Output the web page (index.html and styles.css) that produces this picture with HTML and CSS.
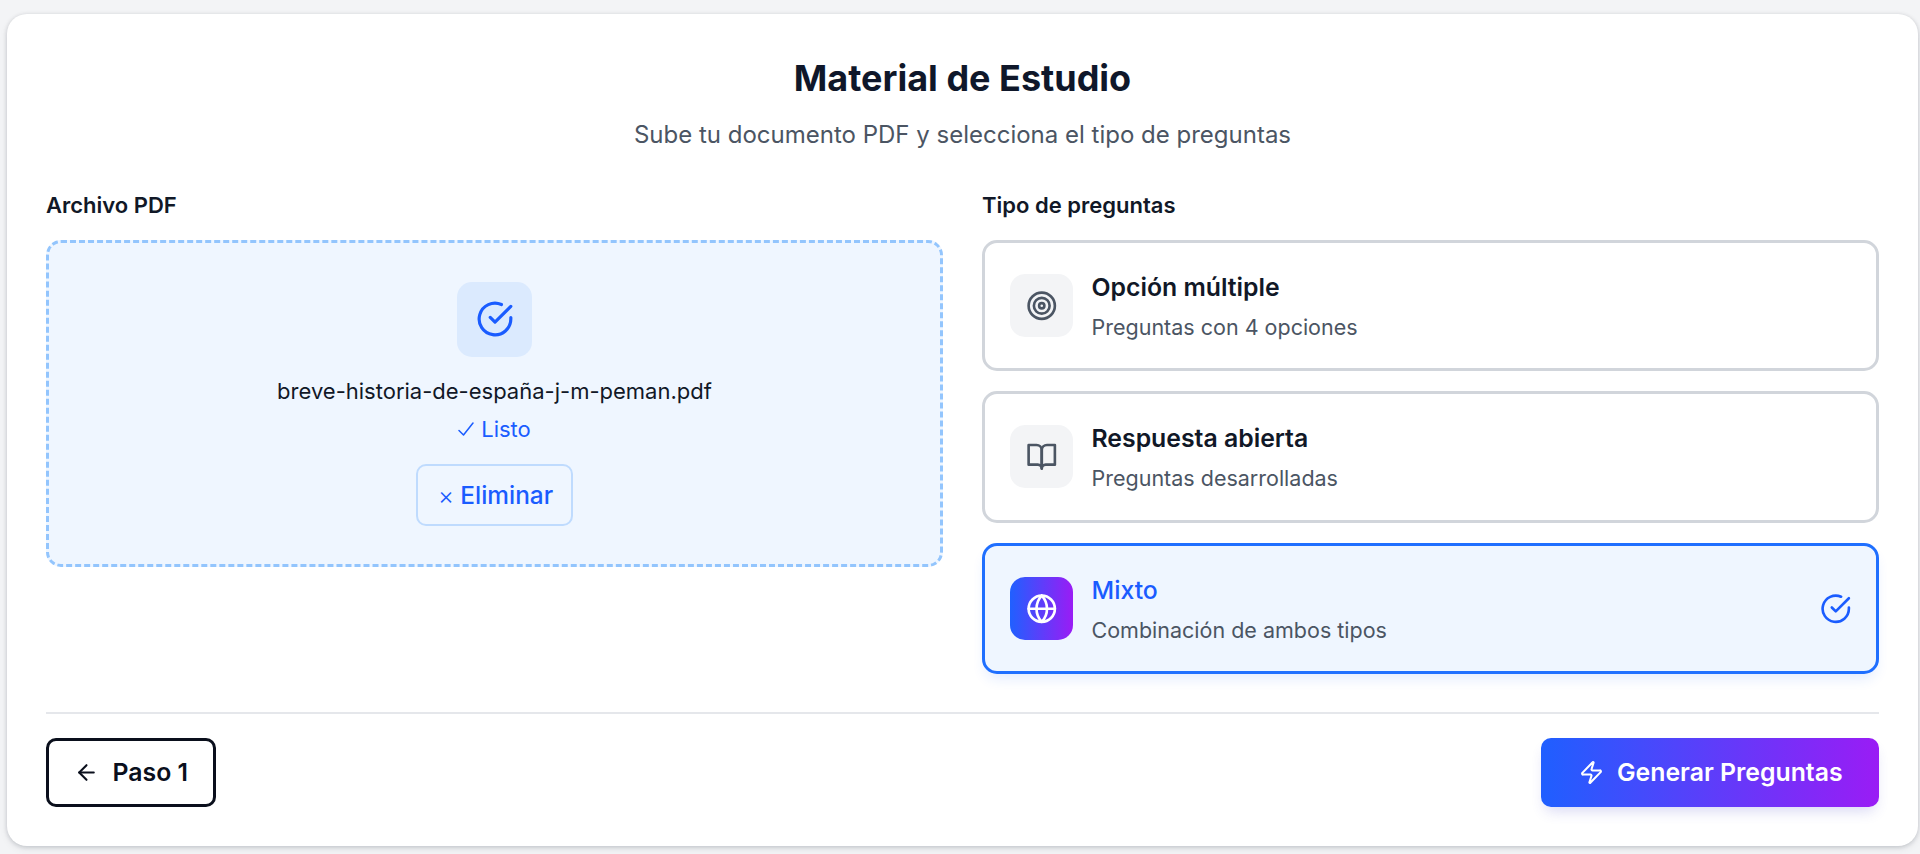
FILE: index.html
```html
<!DOCTYPE html>
<html lang="es">
<head>
<meta charset="utf-8">
<title>Material de Estudio</title>
<link rel="stylesheet" href="styles.css">
</head>
<body>
<main class="card">
  <header class="head">
    <h1>Material de Estudio</h1>
    <p>Sube tu documento PDF y selecciona el tipo de preguntas</p>
  </header>
  <div class="columns">
    <section class="col">
      <h2 class="label">Archivo PDF</h2>
      <div class="drop">
        <div class="drop-icon">
          <svg class="i-lg" viewBox="0 0 24 24"><path d="M22 11.08V12a10 10 0 1 1-5.93-9.14"/><path d="M22 4 12 14.01l-3-3"/></svg>
        </div>
        <div class="file">breve-historia-de-españa-j-m-peman.pdf</div>
        <div class="ready"><svg class="tick" viewBox="0 0 16 14"><path d="M1 8.5 5.5 13 15 1"/></svg>Listo</div>
        <button class="remove"><span class="x">×</span> Eliminar</button>
      </div>
    </section>
    <section class="col">
      <h2 class="label">Tipo de preguntas</h2>
      <div class="options">
        <div class="option">
          <div class="opt-icon"><svg class="i-md" viewBox="0 0 24 24"><circle cx="12" cy="12" r="10"/><circle cx="12" cy="12" r="6"/><circle cx="12" cy="12" r="2"/></svg></div>
          <div class="opt-text"><div class="opt-title">Opción múltiple</div><div class="opt-sub">Preguntas con 4 opciones</div></div>
        </div>
        <div class="option">
          <div class="opt-icon"><svg class="i-md" viewBox="0 0 24 24"><path d="M2 3h6a4 4 0 0 1 4 4v14a3 3 0 0 0-3-3H2z"/><path d="M22 3h-6a4 4 0 0 0-4 4v14a3 3 0 0 1 3-3h7z"/></svg></div>
          <div class="opt-text"><div class="opt-title">Respuesta abierta</div><div class="opt-sub">Preguntas desarrolladas</div></div>
        </div>
        <div class="option selected">
          <div class="opt-icon"><svg class="i-md" viewBox="0 0 24 24"><circle cx="12" cy="12" r="10"/><path d="M12 2a14.5 14.5 0 0 0 0 20 14.5 14.5 0 0 0 0-20"/><path d="M2 12h20"/></svg></div>
          <div class="opt-text"><div class="opt-title">Mixto</div><div class="opt-sub">Combinación de ambos tipos</div></div>
          <svg class="i-md opt-check" viewBox="0 0 24 24"><path d="M22 11.08V12a10 10 0 1 1-5.93-9.14"/><path d="M22 4 12 14.01l-3-3"/></svg>
        </div>
      </div>
    </section>
  </div>
  <footer class="foot">
    <button class="back"><svg class="i-sm" viewBox="0 0 24 24"><path d="m12 19-7-7 7-7"/><path d="M19 12H5"/></svg>Paso 1</button>
    <button class="go"><svg class="i-sm" viewBox="0 0 24 24"><path d="M4 14a1 1 0 0 1-.78-1.63l9.9-10.2a.5.5 0 0 1 .86.46l-1.92 6.02A1 1 0 0 0 13 10h7a1 1 0 0 1 .78 1.63l-9.9 10.2a.5.5 0 0 1-.86-.46l1.92-6.02A1 1 0 0 0 11 14z"/></svg>Generar Preguntas</button>
  </footer>
</main>
</body>
</html>
```
FILE: styles.css
```css
* { box-sizing: border-box; }
html, body { margin: 0; height: 100%; }
body {
  background: #f3f4f6;
  padding: 14px 2px 7px 7px;
  font-family: Inter, "Noto Sans", sans-serif;
  color: #111827;
  overflow: hidden;
}
svg {
  fill: none;
  stroke: currentColor;
  stroke-width: 2;
  stroke-linecap: round;
  stroke-linejoin: round;
  flex: none;
  display: block;
}
.i-lg { width: 38px; height: 38px; }
.i-md { width: 31.5px; height: 31.5px; }
.i-sm { width: 25px; height: 25px; }

.card {
  height: 832px;
  background: #fff;
  border-radius: 20px;
  padding: 0 39px;
  box-shadow: 0 1px 4px rgba(17, 24, 39, .18), 0 3px 8px rgba(17, 24, 39, .07);
}
.head { text-align: center; padding-top: 42px; height: 174px; }
.head h1 {
  margin: 0;
  font-size: 36px;
  line-height: 44px;
  font-weight: 700;
  color: #0f172a;
}
.head p {
  margin: 20px 0 0;
  font-size: 24px;
  line-height: 30px;
  color: #4b5563;
}
.columns { display: grid; grid-template-columns: 1fr 1fr; gap: 39px; }
.label {
  margin: 0 0 19px;
  font-size: 22px;
  line-height: 35px;
  height: 33px;
  font-weight: 600;
  color: #111827;
}
.drop {
  height: 327px;
  border: 3px dashed #93c5fd;
  border-radius: 15px;
  background: #eff6ff;
  display: flex;
  flex-direction: column;
  align-items: center;
  padding-top: 38.5px;
}
.drop-icon {
  width: 75px;
  height: 75px;
  border-radius: 15px;
  background: #dbeafe;
  color: #1a5cff;
  display: flex;
  align-items: center;
  justify-content: center;
}
.file {
  margin-top: 19.5px;
  font-size: 22px;
  line-height: 30px;
  font-weight: 400;
  color: #111827;
}
.ready {
  margin-top: 9px;
  font-size: 22px;
  line-height: 28px;
  color: #1a5cff;
  display: flex;
  align-items: center;
  gap: 7px;
}
.tick { width: 16px; height: 14px; stroke-width: 1.5; }
.remove {
  margin-top: 20.5px;
  width: 157px;
  height: 62px;
  border: 2px solid #bfdbfe;
  border-radius: 10px;
  background: transparent;
  color: #1a5cff;
  font: 500 24.4px/30px Inter, sans-serif;
  padding: 0 0 0 2px;
}
.x { font-weight: 300; }
.options { display: flex; flex-direction: column; gap: 20px; }
.option {
  height: 131.33px;
  border: 3px solid #d1d5db;
  border-radius: 15px;
  background: #fff;
  padding: 0 25px;
  display: flex;
  align-items: center;
  gap: 18.5px;
}
.opt-icon {
  width: 63px;
  height: 63px;
  border-radius: 15px;
  background: #f3f4f6;
  color: #4b5563;
  display: flex;
  align-items: center;
  justify-content: center;
  flex: none;
}
.opt-text { flex: 1; padding-top: 2px; }
.opt-title {
  font-size: 24.8px;
  line-height: 30px;
  font-weight: 600;
  color: #111827;
}
.opt-sub {
  margin-top: 11px;
  font-size: 21.5px;
  line-height: 28px;
  color: #4b5563;
}
.option.selected {
  border-color: #1f6fff;
  background: #eff6ff;
  box-shadow: 0 8px 14px -4px rgba(30, 100, 255, .14);
}
.selected .opt-icon { background: linear-gradient(90deg, #2060ff, #9a1cf5); color: #fff; }
.selected .opt-title { color: #1a5cff; font-weight: 500; }
.opt-check { color: #1a5cff; }

.foot {
  margin-top: 38px;
  border-top: 2px solid #e5e7eb;
  padding-top: 24px;
  display: flex;
  justify-content: space-between;
}
.back, .go {
  height: 69px;
  display: flex;
  align-items: center;
  font: 600 24.8px/30px Inter, sans-serif;
  padding: 0;
  border-radius: 10px;
}
.back {
  width: 170px;
  border: 3px solid #0a0f1c;
  background: #fff;
  color: #0a0f1c;
  padding-left: 24.5px;
  gap: 14px;
}
.go {
  width: 338px;
  border: 0;
  background: linear-gradient(90deg, #1f5fff, #9a1cf5);
  color: #fff;
  padding-left: 38px;
  gap: 13px;
  box-shadow: 0 8px 14px -4px rgba(60, 60, 200, .2);
}
```
